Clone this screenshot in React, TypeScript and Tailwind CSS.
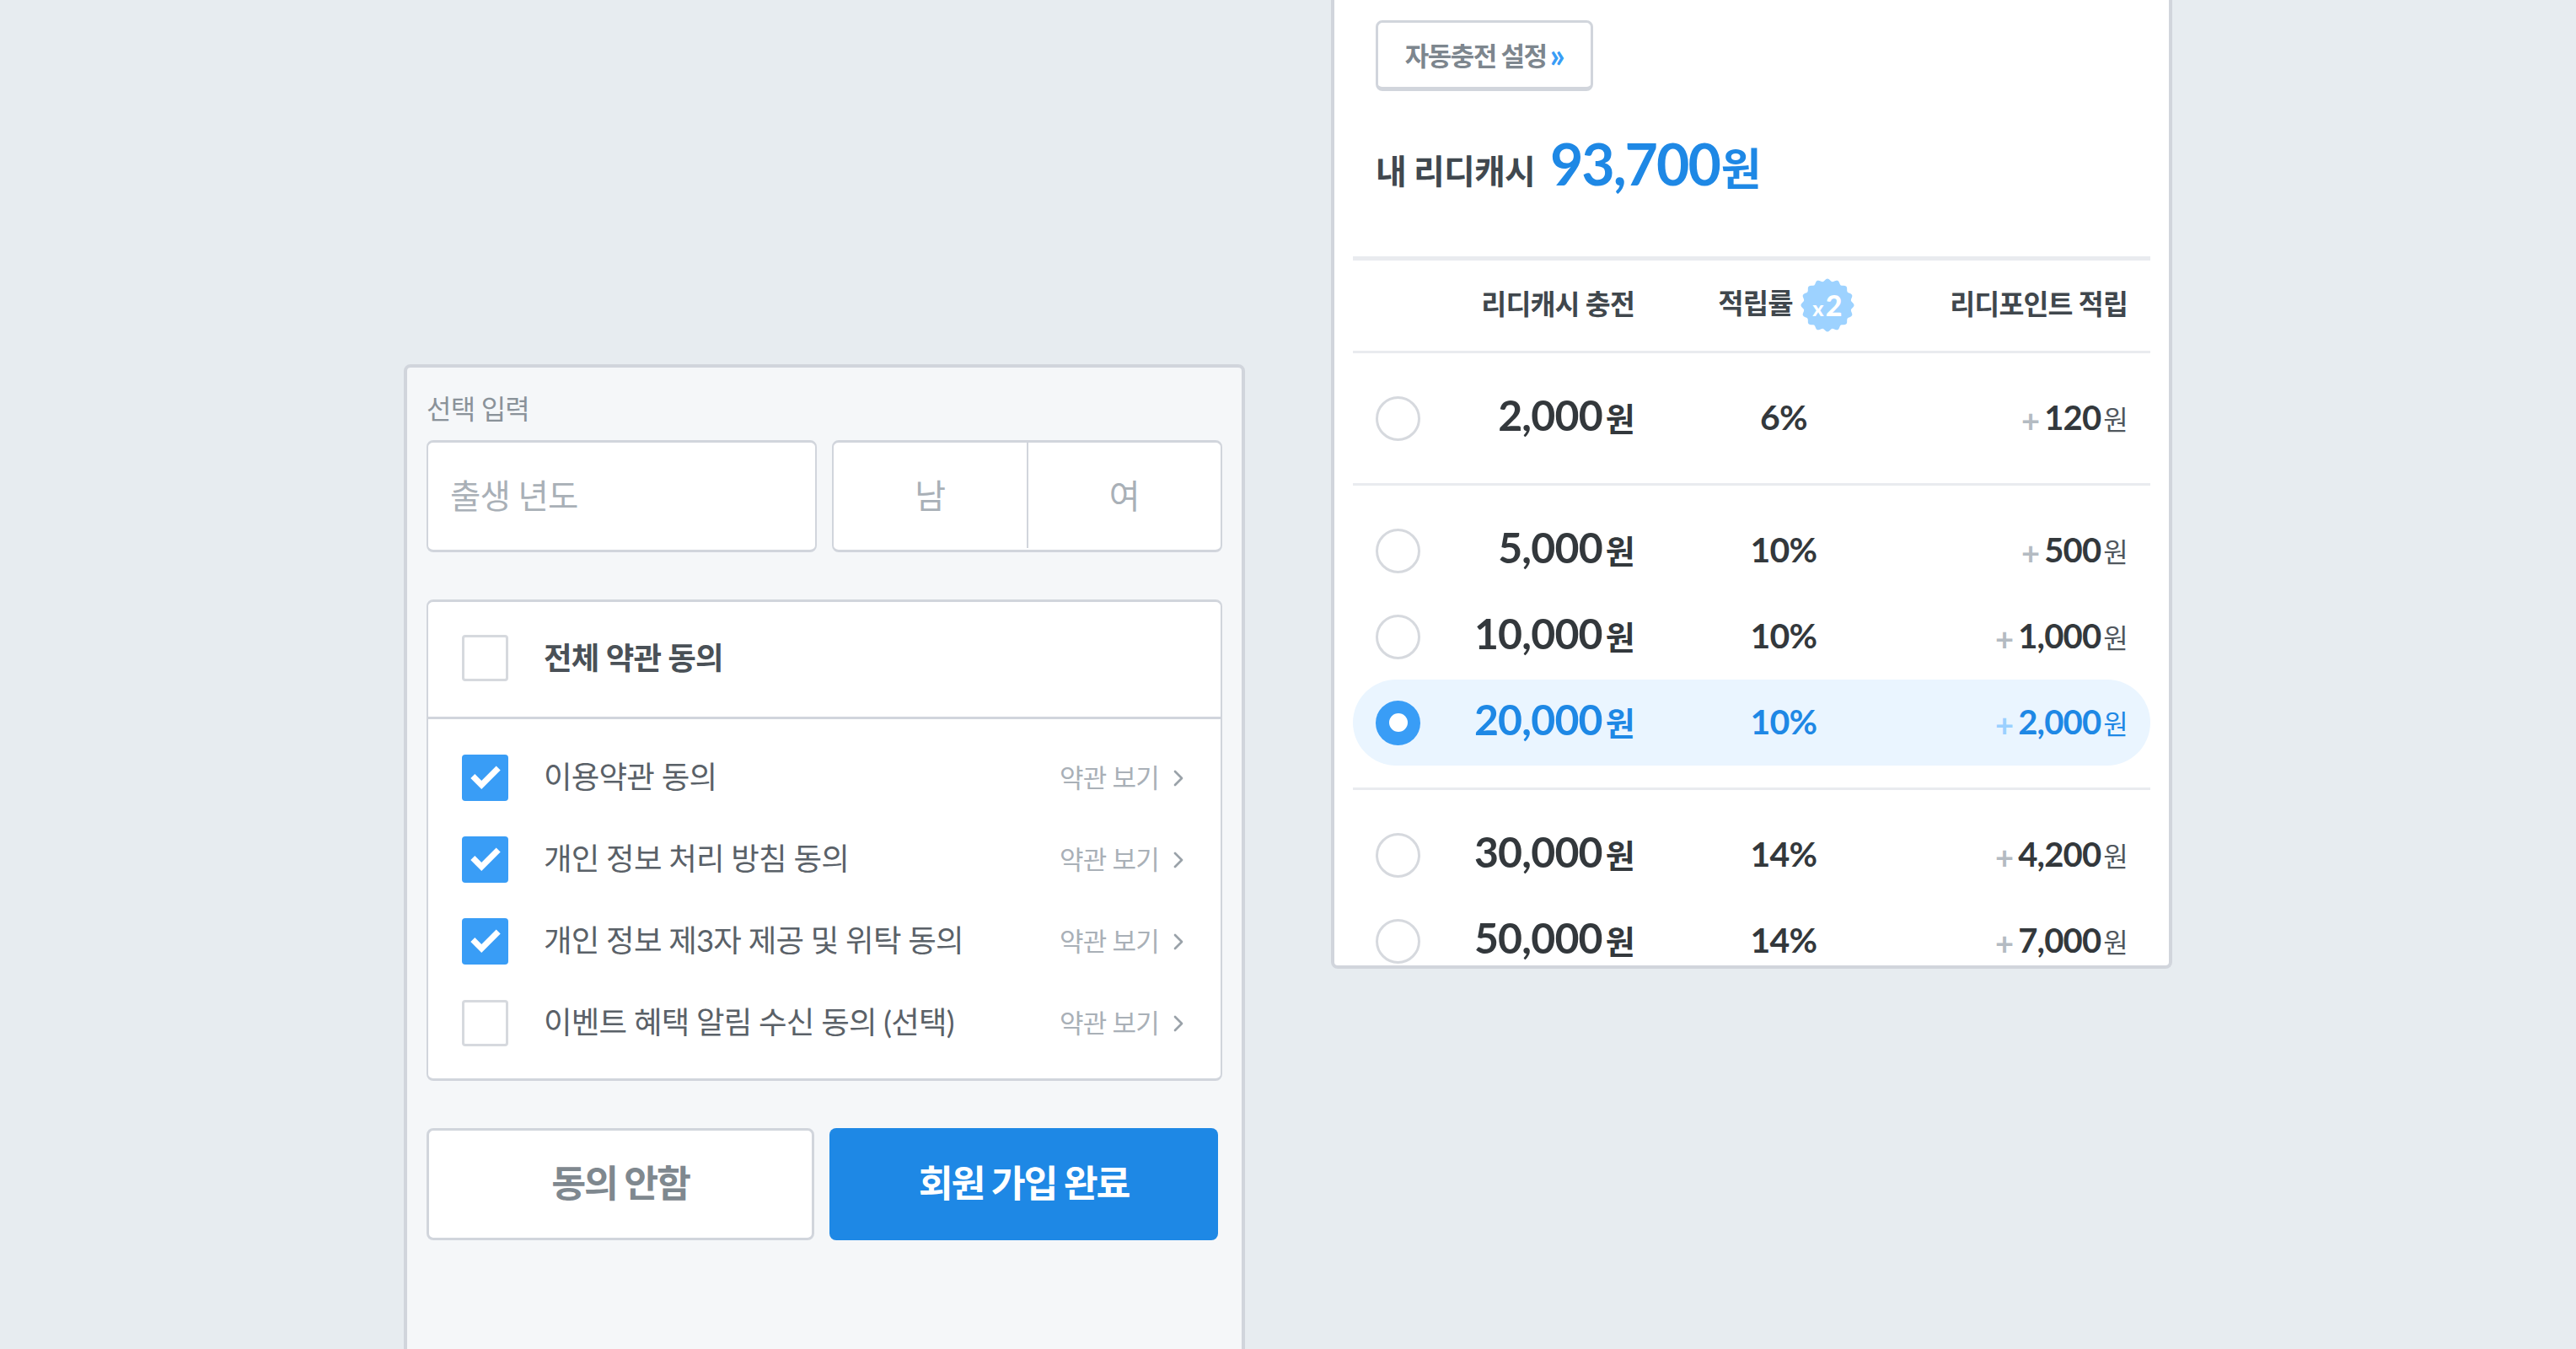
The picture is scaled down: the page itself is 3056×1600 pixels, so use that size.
import React from 'react';
import { Check, ChevronRight } from 'lucide-react';

type Amount = { amount: string; rate: string; point: string; selected?: boolean };

const groups: Amount[][] = [
    [{ amount: '2,000', rate: '6%', point: '120' }],
    [
        { amount: '5,000', rate: '10%', point: '500' },
        { amount: '10,000', rate: '10%', point: '1,000' },
        { amount: '20,000', rate: '10%', point: '2,000', selected: true },
    ],
    [
        { amount: '30,000', rate: '14%', point: '4,200' },
        { amount: '50,000', rate: '14%', point: '7,000' },
    ],
];

const terms = [
    { label: '이용약관 동의', checked: true },
    { label: '개인 정보 처리 방침 동의', checked: true },
    { label: '개인 정보 제3자 제공 및 위탁 동의', checked: true },
    { label: '이벤트 혜택 알림 수신 동의 (선택)', checked: false },
];

// scalloped edge of the x2 badge
const scallop = () => {
    const pts: string[] = [];
    const n = 16 * 8;
    for (let i = 0; i < n; i++) {
        const a = (i / n) * Math.PI * 2;
        const r = 30 + 1.6 * Math.cos(a * 16);
        pts.push(`${(32 + r * Math.cos(a)).toFixed(2)},${(32 + r * Math.sin(a)).toFixed(2)}`);
    }
    return pts.join(' ');
};

const Checkbox = ({ checked }: { checked: boolean }) =>
    checked ? (
        <span className="flex h-[55px] w-[55px] shrink-0 items-center justify-center rounded-[4px] bg-[#399df6]">
            <Check size={38} strokeWidth={4.5} strokeLinecap="square" strokeLinejoin="miter" className="text-white" />
        </span>
    ) : (
        <span className="h-[55px] w-[55px] shrink-0 rounded-[4px] border-[3px] border-[#d6d9de] bg-white" />
    );

const Radio = ({ selected }: { selected?: boolean }) =>
    selected ? (
        <span className="flex h-[53px] w-[53px] shrink-0 items-center justify-center rounded-full bg-[#399df6]">
            <span className="h-[22px] w-[22px] rounded-full bg-white" />
        </span>
    ) : (
        <span className="h-[53px] w-[53px] shrink-0 rounded-full border-[3px] border-[#d6d9de] bg-white" />
    );

const AmountRow = ({ row }: { row: Amount }) => (
    <div className={`flex h-[102px] items-center rounded-full px-[27px] ${row.selected ? 'bg-[#eaf5ff]' : ''}`}>
        <Radio selected={row.selected} />
        <div className={`flex w-[254px] -translate-y-[4px] items-baseline justify-end ${row.selected ? 'text-[#1e88e5]' : 'text-[#33383c]'}`}>
            <span className="text-[50px] font-bold leading-none">{row.amount}</span>
            <span className="ml-[4px] text-[38px] font-bold leading-none">원</span>
        </div>
        <div className={`w-[358px] -translate-x-[2px] -translate-y-[2px] text-center text-[41px] font-bold leading-none ${row.selected ? 'text-[#1e88e5]' : 'text-[#33383c]'}`}>
            {row.rate}
        </div>
        <div className="flex flex-1 -translate-y-[1px] items-baseline justify-end">
            <span className={`mr-[6px] translate-y-[3px] text-[38px] font-bold leading-none ${row.selected ? 'text-[#9bd0ff]' : 'text-[#b4bbc2]'}`}>+</span>
            <span className={`text-[40px] font-bold leading-none ${row.selected ? 'text-[#1e88e5]' : 'text-[#33383c]'}`}>{row.point}</span>
            <span className={`ml-[3px] text-[32px] leading-none ${row.selected ? 'text-[#1e88e5]' : 'text-[#50575d]'}`}>원</span>
        </div>
    </div>
);

const App = () => {
    return (
        <div className="flex h-[1600px] items-start gap-[102px] overflow-hidden bg-[#e7ecf0] pl-[479px] font-['Lato','Noto_Sans_CJK_KR',sans-serif] tracking-[-0.05em]">
            {/* signup form */}
            <div className="mt-[432px] h-[1300px] w-[998px] shrink-0 rounded-[8px] border-4 border-[#d1d5dc] bg-[#f5f7f9] px-[23px]">
                <div className="mt-[23px] mb-[11px] text-[32px] leading-[52px] text-[#8a9299]">선택 입력</div>
                <div className="flex gap-[18px]">
                    <div className="flex h-[133px] w-[463px] items-center rounded-[8px] border-x-2 border-t-[3px] border-b-[3px] border-[#d1d5dc] bg-white pb-[2px] pl-[26px] text-[39.5px] text-[#a9b0b7]">
                        출생 년도
                    </div>
                    <div className="flex h-[133px] w-[463px] rounded-[8px] border-x-2 border-t-[3px] border-b-[3px] border-[#d1d5dc] bg-white pb-[2px] text-[40px] text-[#a9b0b7]">
                        <div className="flex flex-1 items-center justify-center">남</div>
                        <div className="flex flex-1 items-center justify-center border-l-2 border-[#d1d5dc]">여</div>
                    </div>
                </div>

                <div className="mt-[56px] h-[571px] w-[944px] rounded-[8px] border-x-2 border-t-[3px] border-b-[3px] border-[#d1d5dc] bg-white">
                    <div className="flex h-[139px] items-center gap-[42px] border-b-[3px] border-[#d1d5dc] pb-[4px] pl-[40px]">
                        <Checkbox checked={false} />
                        <span className="text-[36.5px] font-bold text-[#4a5157]">전체 약관 동의</span>
                    </div>
                    <div>
                        {terms.map((term, i) => (
                            <div key={i} className="flex h-[97px] items-center gap-[42px] pl-[40px] pr-[34px] first:mt-[21px]">
                                <Checkbox checked={term.checked} />
                                <span className="flex-1 -translate-y-[1px] text-[36.5px] text-[#5a6168]">{term.label}</span>
                                <span className="flex items-center gap-[7px] text-[31px] text-[#a9b0b7]">
                                    약관 보기
                                    <ChevronRight size={32} strokeWidth={2} className="text-[#9aa2a9]" />
                                </span>
                            </div>
                        ))}
                    </div>
                </div>

                <div className="mt-[56px] flex gap-[18px]">
                    <button className="h-[133px] w-[460px] rounded-[8px] border-[3px] border-[#d1d5dc] bg-white pb-[2px] text-[44.5px] font-bold tracking-[-0.05em] text-[#7f888f]">
                        동의 안함
                    </button>
                    <button className="h-[133px] w-[461px] rounded-[8px] bg-[#1e88e5] pb-[2px] text-[44.5px] font-bold tracking-[-0.05em] text-white">
                        회원 가입 완료
                    </button>
                </div>
            </div>

            {/* ridicash charge */}
            <div className="h-[1149px] w-[998px] shrink-0 overflow-hidden rounded-b-[8px] border-x-4 border-b-4 border-[#d1d5dc] bg-white px-[22px]">
                <div className="h-[304px] pl-[27px] pt-[24px]">
                    <button className="flex h-[84px] w-[258px] items-center justify-center gap-[4px] rounded-[8px] border-[3px] border-b-[5px] border-[#d1d5dc] bg-white pt-[3px] text-[31px] font-bold tracking-[-0.05em] text-[#7d868e]">
                        자동충전 설정
                        <span className="-translate-y-[2px] text-[40px] leading-none text-[#399df6]">»</span>
                    </button>
                    <div className="mt-[38px] flex items-baseline">
                        <span className="-translate-y-[2px] text-[40px] font-bold text-[#40484f]">내 리디캐시</span>
                        <span className="ml-[18px] text-[68px] font-bold leading-[96px] tracking-[-0.03em] text-[#1e88e5]">93,700</span>
                        <span className="ml-[2px] text-[52px] font-bold text-[#1e88e5]">원</span>
                    </div>
                </div>

                <div className="flex h-[115px] items-center border-t-[5px] border-b-[3px] border-t-[#e9ebef] border-b-[#e9ebef] px-[27px] pb-[2px] text-[32.5px] font-bold text-[#40474d]">
                    <div className="w-[53px]" />
                    <div className="w-[254px] text-right">리디캐시 충전</div>
                    <div className="flex w-[358px] translate-x-[1px] items-center justify-center gap-[9px]">
                        <span className="-translate-y-[2px] text-[33px]">적립률</span>
                        <span className="relative flex h-[64px] w-[64px] items-center justify-center">
                            <svg viewBox="0 0 64 64" className="absolute inset-0 h-full w-full">
                                <polygon points={scallop()} fill="#9dd2ff" />
                            </svg>
                            <span className="relative flex items-baseline tracking-normal text-white">
                                <span className="mr-[2px] text-[25px] font-black leading-none">x</span>
                                <span className="text-[34px] font-black leading-none">2</span>
                            </span>
                        </span>
                    </div>
                    <div className="flex-1 text-right">리디포인트 적립</div>
                </div>

                {groups.map((group, i) => (
                    <div key={i} className={`py-[26px] ${i < groups.length - 1 ? 'border-b-[3px] border-[#e9ebef]' : ''}`}>
                        {group.map((row) => (
                            <AmountRow key={row.amount} row={row} />
                        ))}
                    </div>
                ))}
            </div>
        </div>
    );
};

export default App;
